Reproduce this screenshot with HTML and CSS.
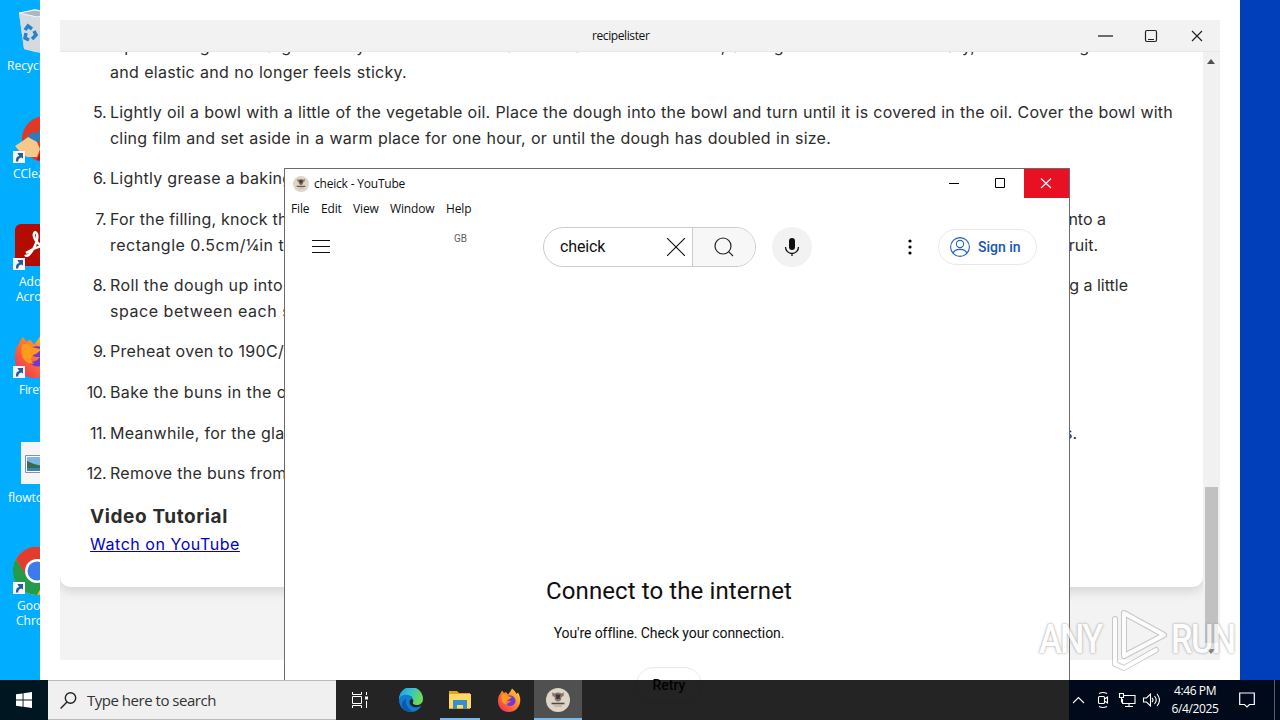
FILE: index.html
```html
<!DOCTYPE html>
<html lang="en">
<head>
<meta charset="utf-8">
<title>Desktop</title>
<link rel="stylesheet" href="styles.css">
</head>
<body>
<svg class="defs" width="0" height="0">
  <defs>
    <symbol id="shortcut" viewBox="0 0 12 12"><rect width="12" height="12" fill="#f4f6fa"/><path d="M3 10.5C2.7 7 4 5.3 6.3 5L5 3.2 4.5 2H10v5.5L8.3 6.5C6 7 5.3 8.500 5.200 10.500z" fill="#2b5a95"/></symbol>
    <symbol id="firefox" viewBox="0 0 24 24">
      <path d="M3 6L5 2.500 7 5 9 4 11 6.500C12 5 14 3 15 .5 17 2 18.500 4 19.500 6L21 4.500C23 8 24 12 22.700 16 21 21 17 24 12 24 5.500 24 1 19.500 1 13 1 10 1.500 8 3 6z" fill="url(#ff)"/>
      <path d="M9 8.500C13 6 19 8 18.500 14 17 18.500 11 19.500 8.500 15.500 11 16 13 14.500 14 13 11 13.500 9 12 9 8.500z" fill="#7038d8"/>
      <path d="M5 6.500C7 6 9 6.500 10 8L15 9 12 11.500C9 12 8.500 15 11 16.500 6 17 3 12 5 6.500z" fill="#ff9a1c"/>
    </symbol>
    <symbol id="chef" viewBox="0 0 24 24"><circle cx="12" cy="12" r="12" fill="#ddd5c6"/><path d="M6 4.500l2.500 1Q12 3.500 15.500 5.500L18 4.500l-.5 3.500-2 1L15 12l-2 1.500h-2L9 12 8.500 9l-2-1z" fill="#8d7468"/><path d="M9.500 6.500h5l-1 4.500h-3z" fill="#39383a"/><path d="M5.500 15.500h13" stroke="#514b47" stroke-width="1.600"/><path d="M8 18h8" stroke="#b59a80"/></symbol>
    <linearGradient id="ff" x1="1" y1="0" x2="0" y2="1"><stop offset="0" stop-color="#ffe13d"/><stop offset=".45" stop-color="#ff832c"/><stop offset="1" stop-color="#f0225f"/></linearGradient>
    <linearGradient id="edge" x1="0" y1="0" x2="1" y2=".35"><stop offset="0" stop-color="#1d9bdc"/><stop offset=".5" stop-color="#35c1d0"/><stop offset="1" stop-color="#6ada58"/></linearGradient>
  </defs>
</svg>
<div class="desktop">
  <div class="shortcut s-bin"><svg width="34" height="46" viewBox="0 0 34 46"><path d="M2 4L18 0 34 4 30 45 18 43 7 40z" fill="#c9d6df"/><path d="M2 4L20 7 34 4 30 45 20 43 7 40z" fill="#d3dbe1"/><path d="M2 4L18 1 34 4 20 8z" fill="#a8b8c3" stroke="#f5f9fb"/><g fill="none" stroke="#2682cf" stroke-width="3.500"><path d="M8 21l3-4 4 3M17 22l2 4-4 4M12 31l-4-2 1-5"/></g></svg><p>Recycle Bin</p></div>
  <div class="shortcut s-cc"><svg width="48" height="48" viewBox="0 0 48 48"><circle cx="32" cy="24" r="23" fill="#df3928"/><path d="M24 45a23 23 0 0 0 30-21L35 18z" fill="#b71920"/><path d="M14 21L20 17 24 19 34 0 40 0 36 22 22 28z" fill="#2d7dbd"/><path d="M2 31L11 25 15 22 24 27 27 34 24 42 14 42 8 38z" fill="#f5c98c"/><use href="#shortcut" y="36" width="12" height="12"/></svg><p>CCleaner</p></div>
  <div class="shortcut s-adobe"><svg width="48" height="48" viewBox="0 0 48 48"><rect x="2" y="1" width="46" height="42" rx="6" fill="#b30b00"/><path d="M12 32C16 37 26 18 24 11 22 6 18 12 24 19 29 25 36 27 39 23 31 21 20 25 13 30" fill="none" stroke="#fff" stroke-width="2.500"/><use href="#shortcut" y="35" width="12" height="12"/></svg><p>Adobe<br>Acrobat</p></div>
  <div class="shortcut s-fox"><svg width="48" height="48" viewBox="0 0 48 48"><use href="#firefox" width="46" height="46"/><use href="#shortcut" y="34" width="12" height="12"/></svg><p>Firefox</p></div>
  <div class="shortcut s-flow"><svg width="40" height="42" viewBox="0 0 40 42"><path d="M0 0h40v42H0z" fill="#f5f5f5"/><path d="M4.500 13.500h35v17h-35z" fill="#fff" stroke="#8090b0"/><path d="M6 15h32v14H6z" fill="#7db7e6"/><path d="M6 19l7 3 8 2v5H6z" fill="#356b51"/><path d="M6 26h15v3H6z" fill="#3b86a5"/></svg><p>flowtoo</p></div>
  <div class="shortcut s-chrome"><svg width="48" height="48" viewBox="0 0 48 48"><circle cx="24" cy="24" r="24" fill="#f4c20d"/><path d="M3 12A24 24 0 0 1 45 12H24L13.500 30z" fill="#e33b2e"/><path d="M3 12A24 24 0 0 0 24 48L34 30H14z" fill="#249b4b"/><circle cx="24" cy="24" r="12" fill="#fff"/><circle cx="24" cy="24" r="9.500" fill="#3d7be8"/><use href="#shortcut" y="35" width="12" height="12"/></svg><p>Google<br>Chrome</p></div>

  <section class="recipe-shell">
    <div class="recipe-window">
      <header class="recipe-title"><span>recipelister</span>
        <svg class="controls" width="108" height="14" viewBox="0 0 108 14" fill="none" stroke="#222"><path d="M1 7h15" stroke-width="1.300"/><rect x="48.500" y="1.500" width="11" height="11" rx="1.500" stroke-width="1.200"/><path d="M51 10.500h6M95 2l10 10M105 2L95 12" stroke-width="1.200"/></svg>
      </header>
      <div class="recipe-body">
        <article class="card">
          <ol class="steps">
            <li><b></b><div><p class="w-wide">Tip the dough onto a generously floured work surface. Knead for five minutes, adding more flour if necessary, until the dough is smooth</p><p class="w-elastic">and elastic and no longer feels sticky.</p></div></li>
            <li><b>5.</b><div><p class="w-oil">Lightly oil a bowl with a little of the vegetable oil. Place the dough into the bowl and turn until it is covered in the oil. Cover the bowl with</p><p class="w-cling">cling film and set aside in a warm place for one hour, or until the dough has doubled in size.</p></div></li>
            <li><b>6.</b><div><p class="plain l6">Lightly grease a baking tray</p></div></li>
            <li><b>7.</b><div><p class="split to-a"><span class="l7">For the filling, knock the</span><span>into a</span></p><p class="split to-fruit"><span class="l7b">rectangle 0.5cm/¼in thick</span><span>fruit.</span></p></div></li>
            <li><b>8.</b><div><p class="split to-little"><span class="l8">Roll the dough up into a</span><span>leaving a little</span></p><p class="plain l8b">space between each slice</p></div></li>
            <li><b>9.</b><div><p class="plain l9">Preheat oven to 190C/375F</p></div></li>
            <li><b>10.</b><div><p class="plain l10">Bake the buns in the oven</p></div></li>
            <li><b>11.</b><div><p class="split to-s"><span class="l11">Meanwhile, for the glaze</span><span>buns.</span></p></div></li>
            <li><b>12.</b><div><p class="plain l12">Remove the buns from the</p></div></li>
          </ol>
          <h3>Video Tutorial</h3>
          <a class="watch">Watch on YouTube</a>
        </article>
        <div class="scroll"><i class="up"></i><i class="thumb"></i><i class="down"></i></div>
      </div>
    </div>
  </section>

  <section class="popup">
    <header class="popup-title"><svg width="16" height="16"><use href="#chef"/></svg><span>cheick - YouTube</span>
      <div class="win-buttons"><svg width="45" height="29" viewBox="0 0 45 29"><path d="M16 14.500h10" stroke="#000"/></svg><svg width="46" height="29" viewBox="0 0 46 29"><path d="M17.500 9.500h9v9h-9z" fill="none" stroke="#000"/></svg><svg class="close" width="45" height="29" viewBox="0 0 45 29"><path d="M17 9.500l10 9.500M27 9.500L17 19" stroke="#fff" stroke-width="1.200"/></svg></div>
    </header>
    <nav class="menu"><span class="m-file">File</span><span class="m-edit">Edit</span><span class="m-view">View</span><span class="m-window">Window</span><span>Help</span></nav>
    <div class="yt-bar">
      <svg class="burger" width="18" height="14"><path d="M0 .5h18M0 6.500h18M0 12.500h18" stroke="#0f0f0f"/></svg>
      <span class="gb">GB</span>
      <div class="search"><span>cheick</span><svg class="clear" width="18" height="18"><path d="M0 0l18 18M18 0L0 18" stroke="#0f0f0f" stroke-width="1.100"/></svg><div class="go"><svg width="20" height="20" viewBox="0 0 20 20" fill="none" stroke="#222" stroke-width="1.200"><circle cx="9" cy="9" r="8"/><path d="M14.600 14.600L19 19"/></svg></div></div>
      <div class="mic"><svg width="24" height="24" viewBox="0 0 24 24"><path d="M12 3a3 3 0 0 1 3 3v6a3 3 0 0 1-6 0V6a3 3 0 0 1 3-3z" fill="#0f0f0f"/><path d="M5.500 12a6.500 6.500 0 0 0 13 0M12 18.500V21" fill="none" stroke="#0f0f0f" stroke-width="1.300"/></svg></div>
      <svg class="dots" width="4" height="16"><circle cx="2" cy="2" r="1.600"/><circle cx="2" cy="8" r="1.600"/><circle cx="2" cy="14" r="1.600"/></svg>
      <div class="signin"><svg width="20" height="20" viewBox="0 0 20 20" fill="none" stroke="#2265b8" stroke-width="1.100"><circle cx="10" cy="10" r="9.400"/><circle cx="10" cy="7" r="3.600"/><path d="M3.300 16.500C4 11 16 11 16.700 16.500"/></svg><span>Sign in</span></div>
    </div>
    <div class="offline"><h1>Connect to the internet</h1><p>You're offline. Check your connection.</p><div class="retry">Retry</div></div>
  </section>

  <div class="watermark"><span>ANY</span><svg width="58" height="64" viewBox="0 0 58 64" fill="none" stroke-linejoin="round" stroke-linecap="round"><g stroke="#8888" stroke-width="6"><path d="M14 5L54 27 14 48zM5 11V56L14 60 46 42"/></g><g stroke="#fff" stroke-width="4"><path d="M14 5L54 27 14 48zM5 11V56L14 60 46 42"/></g></svg><span>RUN</span></div>

  <footer class="taskbar">
    <div class="start"><svg width="16" height="16"><path d="M0 2.300L6.600 1.400V7.600H0zM7.500 1.200L16 0V7.600H7.500zM0 8.500h6.600v6.200L0 13.800zM7.500 8.500H16V16l-8.500-1.200z" fill="#fff"/></svg></div>
    <div class="tsearch"><svg width="17" height="17" viewBox="0 0 17 17" fill="none" stroke="#222" stroke-width="1.400"><circle cx="10.500" cy="6" r="5.200"/><path d="M7 10L.6 16.400"/></svg><span>Type here to search</span></div>
    <div class="task"><svg width="18" height="16" viewBox="0 0 18 16" fill="none" stroke="#fff"><path d="M1.500 0v2.500h9V0M1.500 4.500h9v7h-9zM1.500 16v-2.500h9V16M15.500 0v3M15.500 9v7"/><path d="M14 4.500h3v3h-3z" fill="#fff" stroke="none"/></svg></div>
    <div class="task edge"><svg width="24" height="24" viewBox="0 0 24 24"><path d="M0 11A12 12 0 0 1 24 11C24 15 21 17 17.500 17 14 17 13 15 14.500 13L12 8z" fill="url(#edge)"/><path d="M0 11.500C1 6 11 5 14 10.500 11 10.500 9.500 14 11.500 17 14 20 19 20 22.500 17.500 20 22 16 24 12 24 5 24 0 19 0 11.500z" fill="#127bd0"/><path d="M7 11C6 16 9 21 14 23.700 6 24.500 1 19 3.500 14 4.500 12 6 11 7 11z" fill="#0d57ae"/></svg></div>
    <div class="task run"><svg width="22" height="20" viewBox="0 0 22 20"><path d="M0 1h8l2 2h11v16H0z" fill="#e8a317"/><path d="M0 4h22v14H0z" fill="#ffd966"/><path d="M4 10h14v9h-4v-4H8v4H4z" fill="#3690d0"/></svg></div>
    <div class="task"><svg width="24" height="24"><use href="#firefox"/></svg></div>
    <div class="task active"><svg width="24" height="24"><use href="#chef"/></svg></div>
    <div class="tray">
      <svg width="88" height="20" viewBox="0 0 88 20" fill="none" stroke="#fff" stroke-width="1.100"><path d="M1 13l5.500-5.500L12 13"/><rect x="26.500" y="6.500" width="6" height="7" rx="1"/><path d="M32.500 9l3-2v6l-3-2M27 3.500q4-2 8 0M27 16.500q4 2 8 0M51 5.500h12v8H50.500V9M57 13.500v3M53 16.500h8M47.500 3.500h4v4h-4zM49.500 7.500v5M71.500 8h3l4-4v12l-4-4h-3zM80 8q2 2 0 4M82.500 6q3.500 4 0 8M85 4q5 6 0 12"/></svg>
      <div class="clock"><span>4:46 PM</span><span>6/4/2025</span></div>
      <svg class="note" width="16" height="17" fill="none" stroke="#fff" stroke-width="1.200"><path d="M.7 1h14.600v11.500H10.500L8 15 5.500 12.500H.7z"/></svg>
    </div>
  </footer>
</div>
</body>
</html>
```
FILE: styles.css
```css
* { box-sizing: border-box; }
body { margin: 0; overflow: hidden; }
p, h1, h3, ol { margin: 0; padding: 0; }
svg { display: block; flex: none; }
.defs { position: absolute; }
.desktop { position: relative; width: 1280px; height: 720px; overflow: hidden; background: linear-gradient(90deg, #00adff 0, #00adff 48px, #003fb9 1069px, #003fb9); font-family: "Open Sans", "Noto Sans", sans-serif; }

.shortcut { position: absolute; width: 76px; color: #fff; font-size: 12px; line-height: 15px; }
.shortcut p { position: absolute; left: 0; white-space: nowrap; }
.s-bin { left: 17px; top: 9px; }
.s-bin p { left: -10px; top: 49px; }
.s-cc { left: 13px; top: 115px; }
.s-cc p { top: 51px; }
.s-adobe { left: 13px; top: 223px; }
.s-adobe p { top: 51px; left: 3px; text-indent: 3px; }
.s-fox { left: 13px; top: 332px; }
.s-fox p { left: 6px; top: 50px; letter-spacing: -.3px; }
.s-flow { left: 21px; top: 442px; }
.s-flow p { left: -13px; top: 48px; }
.s-chrome { left: 13px; top: 547px; }
.s-chrome p { left: 3px; top: 51px; text-indent: 1px; }

.recipe-shell { position: absolute; left: 40px; top: 0; width: 1200px; height: 680px; padding: 20px; background: #fff; }
.recipe-window { display: flex; flex-direction: column; width: 1160px; height: 640px; background: #f3f3f3; }
.recipe-title { display: flex; align-items: center; height: 32px; flex: none; padding: 0 16px 0 532px; background: #f2f2f2; border-bottom: 1px solid #e8e8e8; font-size: 12px; line-height: 16px; letter-spacing: -.4px; color: #111; }
.controls { margin-left: auto; margin-right: -1px; }
.recipe-body { display: flex; flex: 1; overflow: hidden; }
.card { width: 1143px; height: 535px; padding: 0 30px; background: #fff; border-radius: 0 0 10px 10px; box-shadow: 0 4px 12px #0002; color: #2c2c2c; font: 16px/25.6px Inter, sans-serif; }
.steps { list-style: none; margin-top: -18px; }
.steps li { display: flex; margin-bottom: 15px; }
.steps b { width: 36px; margin-left: -20px; margin-right: 4px; text-align: right; font-weight: 400; flex: none; letter-spacing: -.5px; }
.steps p { height: 25.600px; white-space: nowrap; text-align-last: justify; }
.steps .plain { text-align-last: left; }
.w-wide { width: 1070px; }
.w-elastic { width: 297px; letter-spacing: .28px; }
.w-oil { width: 1063px; letter-spacing: .22px; }
.w-cling { width: 721px; letter-spacing: .22px; }
.l6 { letter-spacing: .3px; }
.l7 { letter-spacing: .22px; }
.l7b { letter-spacing: .48px; }
.l8 { letter-spacing: .37px; }
.l8b { letter-spacing: .54px; }
.l9 { letter-spacing: .32px; }
.l10 { letter-spacing: .4px; }
.l11 { letter-spacing: .3px; }
.l12 { letter-spacing: .3px; }
.split { display: flex; justify-content: space-between; }
.to-a { width: 996px; }
.to-fruit { width: 988px; }
.to-little { width: 1018px; }
.to-s { width: 967px; }
h3 { margin-top: 3px; font: 700 19px/30px Inter, sans-serif; letter-spacing: .6px; }
.watch { display: inline-block; color: #0000c8; text-decoration: underline; letter-spacing: .54px; }
.scroll { display: flex; flex-direction: column; align-items: center; width: 17px; padding-right: 1px; background: #f1f1f1; }
.up { margin-top: 7px; border: 4px solid transparent; border-top: 0; border-bottom: 5px solid #505050; }
.thumb { width: 13px; height: 156px; margin-top: 423px; background: #c1c1c1; }
.down { margin-top: 6px; border: 4px solid transparent; border-bottom: 0; border-top: 5px solid #808080; }

.popup { position: absolute; left: 284px; top: 168px; width: 786px; height: 570px; border: 1px solid #6c6c6c; background: #fff; color: #0f0f0f; }
.popup-title { display: flex; height: 29px; padding-left: 8px; align-items: center; font-size: 12px; }
.popup-title > span { margin-left: 5px; letter-spacing: -.2px; }
.win-buttons { display: flex; margin-left: auto; }
.close { background: #e81123; }
.menu { display: flex; height: 21px; margin-bottom: 1px; padding-left: 6px; align-items: center; font-size: 12px; letter-spacing: -.15px; }
.m-file { width: 30px; }
.m-edit { width: 32px; }
.m-view { width: 37px; }
.m-window { width: 56px; }
.yt-bar { display: flex; align-items: center; height: 54px; padding: 0 32px 0 27px; font-family: Roboto, sans-serif; }
.gb { width: 14px; margin: -18px 75px 0 124px; font-size: 10px; color: #606060; }
.search { display: flex; align-items: center; width: 213px; height: 40px; padding-left: 16px; border: 1px solid #ccc; border-radius: 20px; overflow: hidden; font-size: 16px; line-height: 18px; letter-spacing: -.15px; }
.clear { margin-left: auto; margin-right: 7px; }
.go { display: flex; width: 63px; height: 38px; align-items: center; justify-content: center; border-left: 1px solid #ccc; background: #f7f7f7; }
.mic { display: flex; width: 40px; height: 40px; margin-left: 16px; align-items: center; justify-content: center; border-radius: 50%; background: #f2f2f2; }
.dots { margin-left: auto; }
.signin { display: flex; width: 99px; height: 36px; margin-left: 26px; padding-left: 11px; align-items: center; gap: 8px; border: 1px solid #e9e9e9; border-radius: 18px; color: #1554b5; font-size: 14px; font-weight: 500; white-space: nowrap; }
.offline { display: flex; flex-direction: column; align-items: center; margin-top: 299px; padding-right: 16px; font-family: Roboto, sans-serif; }
.offline h1 { font-size: 24px; line-height: 36px; font-weight: 400; letter-spacing: .1px; }
.offline p { margin-top: 14px; font-size: 14px; line-height: 20px; letter-spacing: -.09px; }
.retry { width: 66px; height: 36px; margin-top: 24px; border: 1px solid #e9e9e9; border-radius: 18px; text-align: center; font-size: 14px; line-height: 34px; font-weight: 500; }

.watermark { position: absolute; left: 1039px; top: 608px; display: flex; width: 194px; height: 64px; align-items: center; justify-content: space-between; opacity: .75; color: #fff; font: 500 40px/42px Roboto, sans-serif; text-shadow: 0 0 2px #999, 0 0 3px #aaa; }
.watermark span { width: 62px; letter-spacing: -2px; white-space: nowrap; transform: scaleX(.86); transform-origin: left; }
.watermark svg { margin-left: 5px; }

.taskbar { position: absolute; left: 0; top: 680px; display: flex; width: 1280px; height: 40px; background: rgba(0, 0, 0, .86); }
.start { display: flex; width: 48px; align-items: center; justify-content: center; background: #001721; }
.tsearch { display: flex; width: 288px; align-items: center; gap: 10px; padding-left: 12px; background: #f0f0f0; border: 1px solid #bbb; border-width: 1px 0; color: #333; font-size: 15px; letter-spacing: -.48px; }
.task { position: relative; display: flex; width: 48px; align-items: center; justify-content: center; margin-right: 1px; }
.edge { margin-left: 2px; margin-right: 0; }
.run, .active { border-bottom: 2px solid #76b9ed; }
.run svg, .active svg { margin-top: 2px; }
.run { width: 40px; margin: 0 5px; }
.active { background: #505050; margin: 0; }
.tray { display: flex; align-items: center; width: 211px; margin-left: auto; padding-left: 3px; background: #000a1b; color: #fff; font-size: 12px; box-shadow: inset -5px 0 #000a1b, inset -6px 0 #53606c; }
.clock { display: flex; flex-direction: column; width: 64px; margin-left: 3px; align-items: center; line-height: 18px; letter-spacing: -.4px; white-space: nowrap; }
.note { margin-left: 12px; }
```
